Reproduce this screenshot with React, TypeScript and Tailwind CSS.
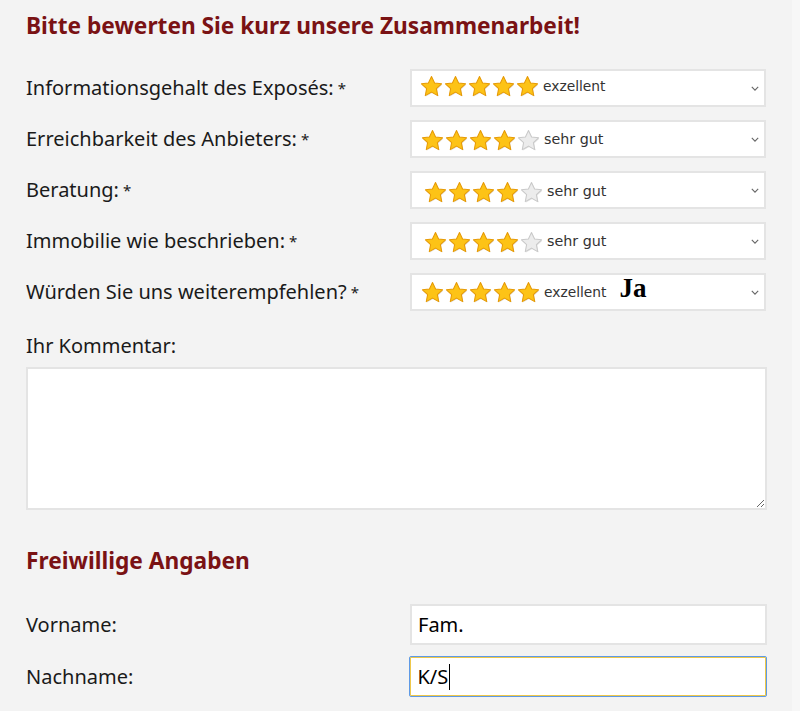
import React from 'react';

interface RatingRow {
  label: string;
  stars: number;
  text: string;
  offset: string;
  extra?: string;
}

const ROWS: RatingRow[] = [
  { label: 'Informationsgehalt des Exposés:', stars: 5, text: 'exzellent', offset: 'pl-[8px] pb-[4px]' },
  { label: 'Erreichbarkeit des Anbieters:', stars: 4, text: 'sehr gut', offset: 'pl-[9px] pt-[2px]' },
  { label: 'Beratung:', stars: 4, text: 'sehr gut', offset: 'pl-[12px] pt-[4px]' },
  { label: 'Immobilie wie beschrieben:', stars: 4, text: 'sehr gut', offset: 'pl-[12px] pt-[2px]' },
  { label: 'Würden Sie uns weiterempfehlen?', stars: 5, text: 'exzellent', offset: 'pl-[9px]', extra: 'Ja' },
];

const STAR_PATH =
  'M12 1.6l3.2 6.7 7.3.9-5.4 5 1.4 7.3L12 17.9l-6.5 3.6 1.4-7.3-5.4-5 7.3-.9z';

function Star({ filled }: { filled: boolean }) {
  return (
    <svg viewBox="0 0 24 24" className="h-[23px] w-[23px] shrink-0">
      <path d={STAR_PATH} transform="translate(0.8 1)" fill="#000" opacity="0.12" />
      <path
        d={STAR_PATH}
        fill={filled ? '#fdc316' : '#ececec'}
        stroke={filled ? '#e69a06' : '#c9c9c9'}
        strokeWidth="1.1"
        strokeLinejoin="round"
      />
    </svg>
  );
}

function Chevron() {
  return (
    <svg viewBox="0 0 10 6" className="h-[5px] w-[8px]">
      <path d="M1 1l4 4 4-4" fill="none" stroke="#666" strokeWidth="1.4" />
    </svg>
  );
}

function RatingSelect({ row }: { row: RatingRow }) {
  const isGood = row.text === 'sehr gut';
  return (
    <div className="flex h-[38px] w-[356px] items-center border-2 border-[#e4e4e4] bg-white pr-[5px]">
      <div className={`flex flex-1 items-center ${row.offset}`}>
        <div className="flex gap-[1px]">
          {[0, 1, 2, 3, 4].map((i) => (
            <Star key={i} filled={i < row.stars} />
          ))}
        </div>
        <span
          className={`ml-[4px] text-[#333] ${isGood ? 'text-[14.3px]' : 'text-[13.8px]'}`}
          style={{ fontFamily: '"DejaVu Sans", Verdana, sans-serif' }}
        >
          {row.text}
        </span>
        {row.extra && (
          <span
            className="ml-[13px] -mt-[8px] text-[27px] leading-[30px] font-bold text-black"
            style={{ fontFamily: '"Liberation Serif", "Times New Roman", serif' }}
          >
            {row.extra}
          </span>
        )}
      </div>
      <Chevron />
    </div>
  );
}

export default function App() {
  return (
    <div
      className="flex min-h-[711px] w-[800px] bg-[#f3f3f3] text-[#1a1a1a]"
      style={{ fontFamily: '"Noto Sans", "Open Sans", sans-serif' }}
    >
      <div className="w-[792px] pl-[26px] pt-[11px]">
        <h1 className="text-[22.7px] font-bold leading-[30px] text-[#7a1214]">
          Bitte bewerten Sie kurz unsere Zusammenarbeit!
        </h1>

        <div className="mt-[28px] flex w-[740px] flex-col gap-[13px]">
          {ROWS.map((row) => (
            <div key={row.label} className="flex items-center">
              <label className="w-[384px] text-[20px] leading-[28px]">
                {row.label}
                <span className="ml-[4px] align-top text-[15px]">*</span>
              </label>
              <RatingSelect row={row} />
            </div>
          ))}
        </div>

        <p className="mt-[21px] text-[20px] leading-[28px]">Ihr Kommentar:</p>
        <textarea className="mt-[7px] block h-[143px] w-[741px] resize-y border-2 border-[#e4e4e4] bg-white outline-none" />

        <h2 className="mt-[36px] text-[22.7px] font-bold leading-[30px] text-[#7a1214]">
          Freiwillige Angaben
        </h2>

        <div className="mt-[28px] flex w-[741px] flex-col gap-[11px]">
          <div className="flex items-center">
            <label className="w-[384px] text-[20px]">Vorname:</label>
            <input
              defaultValue="Fam."
              className="h-[41px] w-[357px] border-2 border-[#e4e4e4] bg-white px-[6px] text-[20px] text-black outline-none"
            />
          </div>
          <div className="flex items-center">
            <label className="w-[384px] text-[20px]">Nachname:</label>
            <div className="flex h-[41px] w-[358px] items-center rounded-[2px] border border-[#5e9ae6] bg-white px-[7px] shadow-[inset_0_0_0_1px_#efc84a]">
              <span className="text-[20px] text-black">K/S</span>
              <span className="ml-[1px] h-[26px] w-[1px] bg-black" />
            </div>
          </div>
        </div>
      </div>
      <div className="flex-1 bg-[#f7f7f7]" />
    </div>
  );
}
